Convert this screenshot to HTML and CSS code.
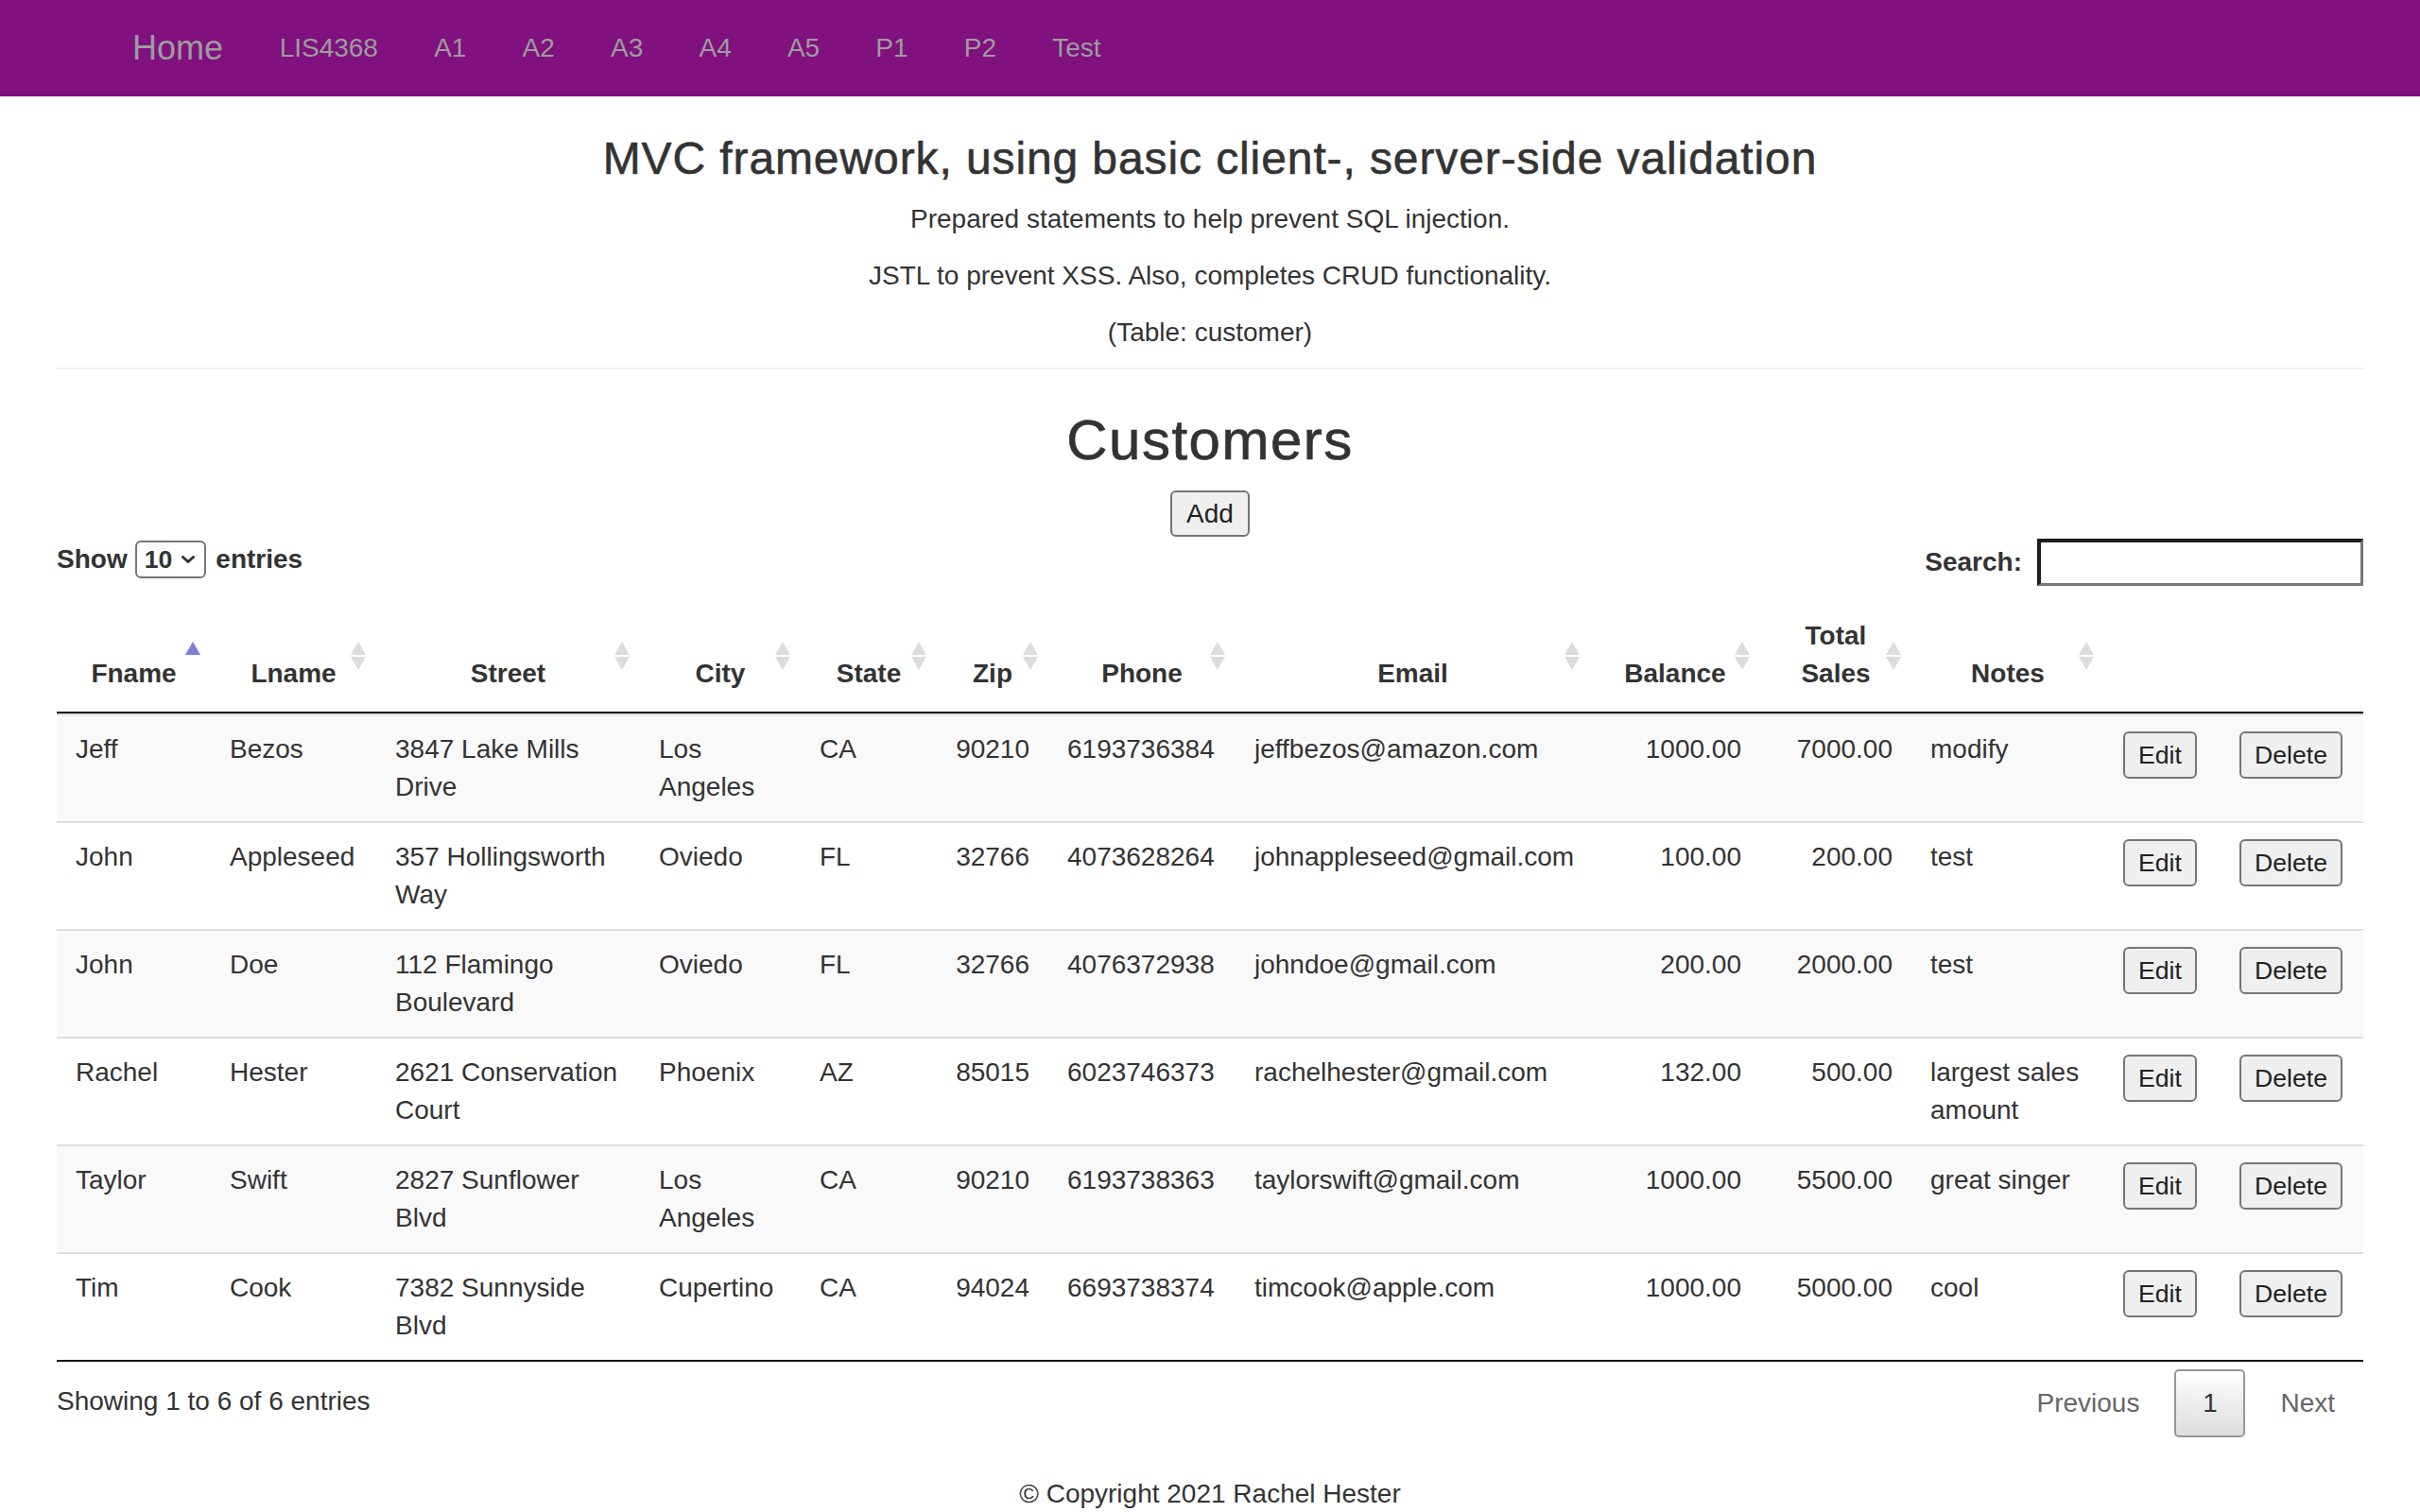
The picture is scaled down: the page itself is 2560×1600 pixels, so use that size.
FILE: index.html
```html
<!DOCTYPE html>
<html lang="en">
<head>
<meta charset="utf-8">
<title>Customers</title>
<link rel="stylesheet" href="styles.css">
</head>
<body>
<nav class="navbar">
  <div class="nav-inner">
    <a class="brand" href="#">Home</a>
    <ul class="nav-links">
      <li><a href="#">LIS4368</a></li>
      <li><a href="#">A1</a></li>
      <li><a href="#">A2</a></li>
      <li><a href="#">A3</a></li>
      <li><a href="#">A4</a></li>
      <li><a href="#">A5</a></li>
      <li><a href="#">P1</a></li>
      <li><a href="#">P2</a></li>
      <li><a href="#">Test</a></li>
    </ul>
  </div>
</nav>

<main class="page">
  <div class="intro">
    <h3 class="title">MVC framework, using basic client-, server-side validation</h3>
    <p>Prepared statements to help prevent SQL injection.</p>
    <p>JSTL to prevent XSS. Also, completes CRUD functionality.</p>
    <p class="last">(Table: customer)</p>
  </div>
  <hr class="divider">

  <div class="heading-block">
    <h2 class="customers">Customers</h2>
    <button class="btn add-btn" type="button">Add</button>
  </div>

  <div class="dt-top">
    <label class="dt-length">Show <span class="select-box">10<svg class="chev" width="14" height="8" viewBox="0 0 14 8"><polyline points="1.5,1.5 7,6.5 12.5,1.5" fill="none" stroke="#333" stroke-width="3" stroke-linecap="round" stroke-linejoin="round"/></svg></span> entries</label>
    <label class="dt-filter">Search:<input class="search" type="search"></label>
  </div>

  <table class="dt">
    <colgroup>
      <col class="c-fname"><col class="c-lname"><col class="c-street"><col class="c-city"><col class="c-state"><col class="c-zip"><col class="c-phone"><col class="c-email"><col class="c-bal"><col class="c-total"><col class="c-notes"><col class="c-edit"><col class="c-del">
    </colgroup>
    <thead>
      <tr>
        <th class="sort">Fname<svg class="sort-icon" width="16" height="30" viewBox="0 0 16 30"><polygon points="8,0 16,14 0,14" fill="#7d80dd"/></svg></th>
        <th class="sort">Lname<svg class="sort-icon" width="16" height="30" viewBox="0 0 16 30"><polygon points="8,0 16,14 0,14" fill="#dcdcdc"/><polygon points="0,16 16,16 8,30" fill="#dcdcdc"/></svg></th>
        <th class="sort">Street<svg class="sort-icon" width="16" height="30" viewBox="0 0 16 30"><polygon points="8,0 16,14 0,14" fill="#dcdcdc"/><polygon points="0,16 16,16 8,30" fill="#dcdcdc"/></svg></th>
        <th class="sort">City<svg class="sort-icon" width="16" height="30" viewBox="0 0 16 30"><polygon points="8,0 16,14 0,14" fill="#dcdcdc"/><polygon points="0,16 16,16 8,30" fill="#dcdcdc"/></svg></th>
        <th class="sort">State<svg class="sort-icon" width="16" height="30" viewBox="0 0 16 30"><polygon points="8,0 16,14 0,14" fill="#dcdcdc"/><polygon points="0,16 16,16 8,30" fill="#dcdcdc"/></svg></th>
        <th class="sort">Zip<svg class="sort-icon" width="16" height="30" viewBox="0 0 16 30"><polygon points="8,0 16,14 0,14" fill="#dcdcdc"/><polygon points="0,16 16,16 8,30" fill="#dcdcdc"/></svg></th>
        <th class="sort">Phone<svg class="sort-icon" width="16" height="30" viewBox="0 0 16 30"><polygon points="8,0 16,14 0,14" fill="#dcdcdc"/><polygon points="0,16 16,16 8,30" fill="#dcdcdc"/></svg></th>
        <th class="sort">Email<svg class="sort-icon" width="16" height="30" viewBox="0 0 16 30"><polygon points="8,0 16,14 0,14" fill="#dcdcdc"/><polygon points="0,16 16,16 8,30" fill="#dcdcdc"/></svg></th>
        <th class="sort">Balance<svg class="sort-icon" width="16" height="30" viewBox="0 0 16 30"><polygon points="8,0 16,14 0,14" fill="#dcdcdc"/><polygon points="0,16 16,16 8,30" fill="#dcdcdc"/></svg></th>
        <th class="sort">Total Sales<svg class="sort-icon" width="16" height="30" viewBox="0 0 16 30"><polygon points="8,0 16,14 0,14" fill="#dcdcdc"/><polygon points="0,16 16,16 8,30" fill="#dcdcdc"/></svg></th>
        <th class="sort">Notes<svg class="sort-icon" width="16" height="30" viewBox="0 0 16 30"><polygon points="8,0 16,14 0,14" fill="#dcdcdc"/><polygon points="0,16 16,16 8,30" fill="#dcdcdc"/></svg></th>
        <th></th>
        <th></th>
      </tr>
    </thead>
    <tbody>
      <tr class="odd">
        <td>Jeff</td><td>Bezos</td><td>3847 Lake Mills Drive</td><td>Los Angeles</td><td>CA</td><td class="num">90210</td><td>6193736384</td><td>jeffbezos@amazon.com</td><td class="num">1000.00</td><td class="num">7000.00</td><td>modify</td>
        <td><button class="btn row-btn" type="button">Edit</button></td><td><button class="btn row-btn" type="button">Delete</button></td>
      </tr>
      <tr>
        <td>John</td><td>Appleseed</td><td>357 Hollingsworth Way</td><td>Oviedo</td><td>FL</td><td class="num">32766</td><td>4073628264</td><td>johnappleseed@gmail.com</td><td class="num">100.00</td><td class="num">200.00</td><td>test</td>
        <td><button class="btn row-btn" type="button">Edit</button></td><td><button class="btn row-btn" type="button">Delete</button></td>
      </tr>
      <tr class="odd">
        <td>John</td><td>Doe</td><td>112 Flamingo Boulevard</td><td>Oviedo</td><td>FL</td><td class="num">32766</td><td>4076372938</td><td>johndoe@gmail.com</td><td class="num">200.00</td><td class="num">2000.00</td><td>test</td>
        <td><button class="btn row-btn" type="button">Edit</button></td><td><button class="btn row-btn" type="button">Delete</button></td>
      </tr>
      <tr>
        <td>Rachel</td><td>Hester</td><td>2621 Conservation Court</td><td>Phoenix</td><td>AZ</td><td class="num">85015</td><td>6023746373</td><td>rachelhester@gmail.com</td><td class="num">132.00</td><td class="num">500.00</td><td>largest sales amount</td>
        <td><button class="btn row-btn" type="button">Edit</button></td><td><button class="btn row-btn" type="button">Delete</button></td>
      </tr>
      <tr class="odd">
        <td>Taylor</td><td>Swift</td><td>2827 Sunflower Blvd</td><td>Los Angeles</td><td>CA</td><td class="num">90210</td><td>6193738363</td><td>taylorswift@gmail.com</td><td class="num">1000.00</td><td class="num">5500.00</td><td>great singer</td>
        <td><button class="btn row-btn" type="button">Edit</button></td><td><button class="btn row-btn" type="button">Delete</button></td>
      </tr>
      <tr>
        <td>Tim</td><td>Cook</td><td>7382 Sunnyside Blvd</td><td>Cupertino</td><td>CA</td><td class="num">94024</td><td>6693738374</td><td>timcook@apple.com</td><td class="num">1000.00</td><td class="num">5000.00</td><td>cool</td>
        <td><button class="btn row-btn" type="button">Edit</button></td><td><button class="btn row-btn" type="button">Delete</button></td>
      </tr>
    </tbody>
  </table>

  <div class="dt-bottom">
    <div class="dt-info">Showing 1 to 6 of 6 entries</div>
    <div class="dt-paginate">
      <span class="pg disabled">Previous</span>
      <span class="pg current">1</span>
      <span class="pg disabled">Next</span>
    </div>
  </div>

  <footer class="footer">© Copyright 2021 Rachel Hester</footer>
</main>
</body>
</html>
```

FILE: styles.css
```css
html, body {
  margin: 0;
  padding: 0;
}

body {
  font-family: "Liberation Sans", Arial, sans-serif;
  font-size: 28px;
  line-height: 40px;
  color: #333;
  background: #fff;
}

/* Navbar */
.navbar {
  height: 102px;
  background: #80117e;
}

.nav-inner {
  width: 2340px;
  margin: 0 auto;
  height: 100%;
  display: flex;
  align-items: center;
}

.brand {
  font-size: 36px;
  line-height: 40px;
  color: #9d9d9d;
  text-decoration: none;
  padding: 0 30px;
}

.nav-links {
  list-style: none;
  margin: 0;
  padding: 0;
  display: flex;
}

.nav-links a {
  display: block;
  padding: 0 29.6px;
  font-size: 28px;
  line-height: 40px;
  color: #9d9d9d;
  text-decoration: none;
}

/* Page */
.page {
  padding: 0 60px;
}

.intro {
  text-align: center;
}

.title {
  margin: 39px 0 18px;
  font-size: 48px;
  line-height: 53px;
  font-weight: 500;
  letter-spacing: 0.9px;
  -webkit-text-stroke: 0.6px #333;
}

.intro p {
  margin: 0 0 20px;
}

.intro p.last {
  margin-bottom: 17px;
}

.divider {
  margin: 0;
  border: 0;
  border-top: 2px solid #eee;
  height: 0;
}

.heading-block {
  display: flex;
  flex-direction: column;
  align-items: center;
}

.customers {
  margin: 42px 0 20px;
  font-size: 60px;
  line-height: 66px;
  font-weight: 500;
  letter-spacing: 1.5px;
  -webkit-text-stroke: 0.7px #333;
}

.btn {
  font-family: "Liberation Sans", Arial, sans-serif;
  font-size: 26.67px;
  line-height: 30px;
  color: #222;
  background: #efefef;
  border: 2px solid #767676;
  border-radius: 6px;
  padding: 8px 14px;
  margin: 0;
}

.add-btn {
  font-size: 28px;
  line-height: 29px;
  padding: 8px 15px;
}

/* DataTables top */
.dt-top {
  margin-top: 2px;
  display: flex;
  justify-content: space-between;
  align-items: flex-start;
  height: 50px;
}

.dt-length {
  display: flex;
  align-items: center;
  font-weight: bold;
  margin-top: 2px;
}

.select-box {
  display: inline-flex;
  align-items: center;
  gap: 10px;
  box-sizing: border-box;
  height: 40px;
  border: 2px solid #767676;
  border-radius: 6px;
  padding: 0 10px 0 8px;
  margin: 0 10px 0 8px;
  font-size: 26.67px;
  font-weight: bold;
  color: #333;
}

.dt-filter {
  display: flex;
  align-items: center;
  font-weight: bold;
}

.search {
  box-sizing: border-box;
  width: 345px;
  height: 50px;
  margin: 0 0 0 16px;
  padding: 2px 4px;
  border-style: solid;
  border-width: 4px 3px 3px 4px;
  border-color: #1c1c1c #767676 #767676 #1c1c1c;
  background: #fff;
  font-size: 26px;
  outline: none;
}

/* Table */
.dt {
  margin-top: 13px;
  width: 2440px;
  table-layout: fixed;
  border-collapse: separate;
  border-spacing: 0;
  border-bottom: 2px solid #111;
}

.c-fname { width: 163px; }
.c-lname { width: 175px; }
.c-street { width: 279px; }
.c-city { width: 170px; }
.c-state { width: 144px; }
.c-zip { width: 118px; }
.c-phone { width: 198px; }
.c-email { width: 375px; }
.c-bal { width: 180px; }
.c-total { width: 160px; }
.c-notes { width: 204px; }
.c-edit { width: 123px; }
.c-del { width: 151px; }

.dt th {
  position: relative;
  padding: 20px;
  font-weight: bold;
  text-align: center;
  vertical-align: bottom;
  border-bottom: 2px solid #111;
  line-height: 40px;
}

.sort-icon {
  position: absolute;
  right: 11px;
  top: calc(50% - 14px);
}

.dt td {
  padding: 16px 20px;
  border-top: 2px solid #ddd;
  vertical-align: top;
  text-align: left;
}

.dt tr.odd td {
  background: #f9f9f9;
}

.dt td.num {
  text-align: right;
}

.row-btn {
  margin-top: 1px;
  display: inline-block;
}

/* DataTables bottom */
.dt-bottom {
  display: flex;
  justify-content: space-between;
  align-items: flex-start;
}

.dt-info {
  padding-top: 22px;
}

.dt-paginate {
  padding-top: 8px;
  display: flex;
  gap: 7px;
}

.pg {
  display: inline-block;
  box-sizing: border-box;
  padding: 14px 28px;
  line-height: 40px;
  border: 2px solid transparent;
  border-radius: 5px;
  text-align: center;
  color: #333;
}

.pg.disabled {
  color: #666;
}

.pg.current {
  min-width: 75px;
  padding: 14px 20px;
  border-color: #979797;
  background: linear-gradient(to bottom, #ffffff 0%, #dcdcdc 100%);
}

.footer {
  margin-top: 40px;
  padding-bottom: 40px;
  text-align: center;
}
```
